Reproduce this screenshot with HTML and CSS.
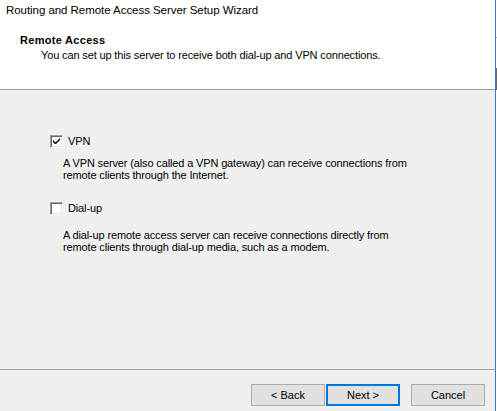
FILE: index.html
```html
<!DOCTYPE html>
<html>
<head>
<meta charset="utf-8" />
<title>Routing and Remote Access Server Setup Wizard</title>
<link rel="stylesheet" href="styles.css">
</head>
<body>
	<div id="wizard">
		<div class="top">
			<div class="caption">Routing and Remote Access Server Setup Wizard</div>
			<div class="head">
				<strong>Remote Access</strong>
				<p>You can set up this server to receive both dial-up and VPN connections.</p>
			</div>
		</div>
		<div class="main">
			<div class="opt opt-vpn">
				<span class="box checked">
					<svg width="7" height="7" viewBox="0 0 7 7"><path d="M0 2 L0 4 L2 6 L3 6 L7 2 L7 0 L2.5 4.5 Z" fill="#000"/></svg>
				</span>
				<span class="label">VPN</span>
			</div>
			<p class="desc desc-vpn">A VPN server (also called a VPN gateway) can receive connections from<br/>remote clients through the Internet.</p>
			<div class="opt opt-dial">
				<span class="box"></span>
				<span class="label">Dial-up</span>
			</div>
			<p class="desc desc-dial">A dial-up remote access server can receive connections directly from<br/>remote clients through dial-up media, such as a modem.</p>
		</div>
		<div class="foot">
			<button class="btn btn-back">&lt; Back</button>
			<button class="btn btn-next">Next &gt;</button>
			<button class="btn btn-cancel">Cancel</button>
		</div>
	</div>
	<div class="edge">
		<span class="tick"></span>
		<span class="grip"></span>
	</div>
</body>
</html>
```

FILE: styles.css
```css
*{margin:0;padding:0;box-sizing:border-box;}
html,body{width:497px;height:411px;overflow:hidden;}
body{display:flex;background:#fff;font-family:"Liberation Sans",Arial,sans-serif;font-size:11px;letter-spacing:-0.14px;color:#000;}
#wizard{width:496px;height:411px;display:flex;flex-direction:column;border-right:1px solid #2b79c9;background:#f0f0f0;}
.top{height:90px;background:#fff;border-bottom:1px solid #a0a0a0;}
.caption{font-size:11.5px;letter-spacing:-0.05px;line-height:16px;padding:2px 0 0 6px;}
.head{padding:15px 0 0 20px;}
.head strong{display:block;font-size:11px;letter-spacing:0.3px;line-height:14px;}
.head p{line-height:14px;margin-top:1px;padding-left:21px;}
.main{flex:1;padding:45px 0 0 50px;}
.opt{display:flex;align-items:center;height:13px;}
.box{width:13px;height:13px;background:#fff;border:1px solid;border-color:#a0a0a0 #fff #fff #a0a0a0;box-shadow:inset 1px 1px 0 #696969,inset -1px -1px 0 #e3e3e3;display:flex;align-items:center;justify-content:center;}
.label{margin-left:5px;line-height:13px;}
.desc{line-height:12px;margin-left:13px;}
.desc-vpn{margin-top:9px;}
.opt-dial{margin-top:21px;}
.desc-dial{margin-top:14px;}
.foot{height:42px;border-top:1px solid #a0a0a0;display:flex;justify-content:flex-end;align-items:flex-start;padding:14px 10px 0 0;}
.btn{width:74px;height:22px;background:#e1e1e1;border:1px solid #adadad;font-family:inherit;font-size:11px;letter-spacing:0;color:#000;}
.btn-back{margin-right:1px;}
.btn-next{border:2px solid #0078d7;margin-right:11px;}
.edge{width:1px;height:411px;display:flex;flex-direction:column;}
.tick{height:1px;margin-top:37px;background:#b0b0b0;}
.grip{height:22px;margin-top:30px;background:#6a6a6a;}
```
